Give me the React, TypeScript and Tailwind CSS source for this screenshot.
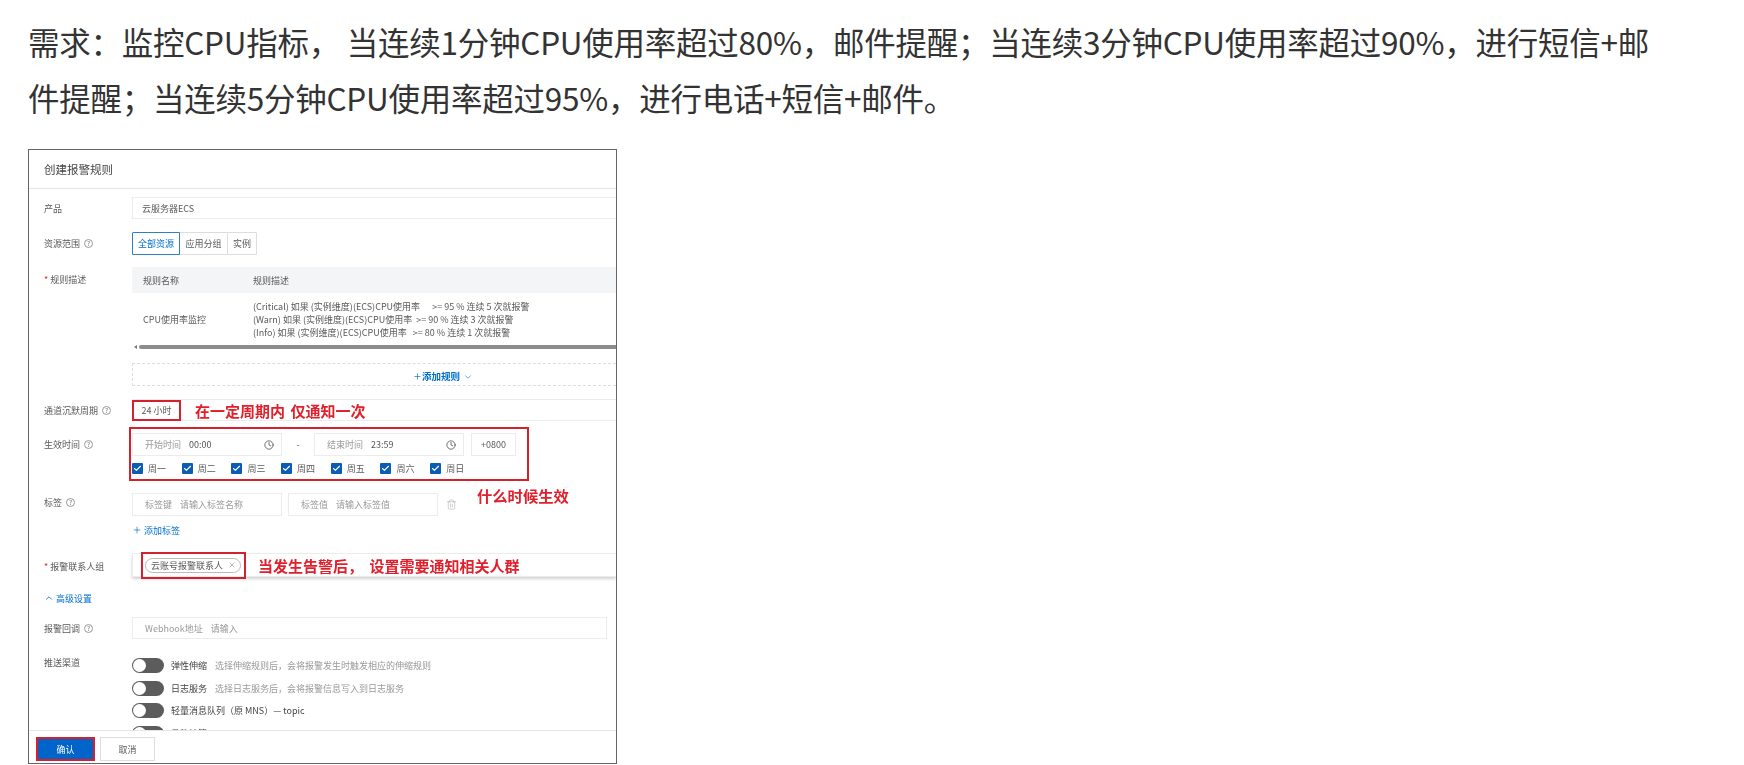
import React from 'react';
import { Check, ChevronDown, ChevronUp, Clock, Plus, Trash2, X } from 'lucide-react';

const days = ['周一', '周二', '周三', '周四', '周五', '周六', '周日'];

const channels = [
  { name: '弹性伸缩', hint: '选择伸缩规则后，会将报警发生时触发相应的伸缩规则' },
  { name: '日志服务', hint: '选择日志服务后，会将报警信息写入到日志服务' },
  { name: '轻量消息队列（原 MNS）— topic', hint: '' },
  { name: '函数计算', hint: '' },
];

function Help() {
  return (
    <span className="ml-[4px] inline-flex size-[9px] items-center justify-center rounded-full border border-[#999] text-[6.5px] leading-none text-[#777]">
      ?
    </span>
  );
}

function Row({
  label,
  required,
  help,
  labelClass = 'h-[22px]',
  className,
  children,
}: {
  label: string;
  required?: boolean;
  help?: boolean;
  labelClass?: string;
  className: string;
  children: React.ReactNode;
}) {
  return (
    <div className={`flex ${className}`}>
      <div className={`flex w-[103px] shrink-0 items-center pl-[15px] ${labelClass}`}>
        {required && <span className="mr-[2px] text-[#d93026]">*</span>}
        {label}
        {help && <Help />}
      </div>
      <div className="relative min-w-0 flex-1">{children}</div>
    </div>
  );
}

function Field({ label, value, className }: { label: string; value: string; className: string }) {
  return (
    <div className={`flex h-[23px] items-center border border-[#ececec] pl-[12px] ${className}`}>
      <span className="text-[#999]">{label}</span>
      <span className="ml-[8px] text-[#999]">{value}</span>
    </div>
  );
}

function TimeField({ label, value }: { label: string; value: string }) {
  return (
    <div className="flex h-[23px] w-[150px] items-center border border-[#ececec] pl-[12px] pr-[7px]">
      <span className="text-[#999]">{label}</span>
      <span className="ml-[8px] text-[#555]">{value}</span>
      <Clock className="ml-auto size-[10px] text-[#444]" strokeWidth={1.8} />
    </div>
  );
}

function AlertForm() {
  return (
    <div className="flex h-[615px] w-[589px] flex-col overflow-hidden border border-[#666] bg-white text-[9px] leading-[13px] text-[#5a5a5a] blur-[0.5px]">
      <div className="flex h-[39px] shrink-0 items-center border-b border-[#e6e6e6] pl-[15px] text-[11.5px] text-[#444]">
        创建报警规则
      </div>

      <div className="min-h-0 flex-1 overflow-hidden">
        <Row label="产品" className="mt-[8px]">
          <div className="flex h-[22px] items-center border border-r-0 border-[#ececec] pl-[9px]">云服务器ECS</div>
        </Row>

        <Row label="资源范围" help labelClass="h-[23px]" className="mt-[13px]">
          <div className="flex h-[23px]">
            <div className="flex w-[48px] items-center justify-center rounded-l-[1px] border border-[#2f7fc1] text-[#0070cc]">全部资源</div>
            <div className="flex w-[47px] items-center justify-center border-y border-[#ddd]">应用分组</div>
            <div className="flex w-[30px] items-center justify-center rounded-r-[1px] border border-[#ddd]">实例</div>
          </div>
        </Row>

        <Row label="规则描述" required labelClass="h-[24px]" className="mt-[12px]">
          <div className="flex h-[26px] items-center bg-[#f4f5f7] pl-[11px]">
            <span className="w-[110px]">规则名称</span>
            <span>规则描述</span>
          </div>
          <div className="flex items-center pl-[11px] pt-[7px] whitespace-nowrap">
            <span className="w-[110px]">CPU使用率监控</span>
            <div>
              <div>(Critical) 如果 (实例维度)(ECS)CPU使用率 &nbsp; &nbsp; &nbsp;&gt;= 95 % 连续 5 次就报警</div>
              <div>(Warn) 如果 (实例维度)(ECS)CPU使用率 &nbsp;&gt;= 90 % 连续 3 次就报警</div>
              <div>(Info) 如果 (实例维度)(ECS)CPU使用率 &nbsp; &gt;= 80 % 连续 1 次就报警</div>
            </div>
          </div>
          <div className="mt-[6px] flex h-[4px] items-center">
            <span className="mx-[2px] h-0 w-0 border-y-[2px] border-r-[3px] border-y-transparent border-r-[#777]" />
            <div className="h-[4px] flex-1 rounded-l-full bg-[#8c8c8c]" />
          </div>
          <div className="mt-[14px] flex h-[23px] items-center border border-r-0 border-dashed border-[#ddd] pl-[280px] pt-[4px] text-[9.5px] font-semibold text-[#0070cc]">
            <Plus className="size-[9px]" strokeWidth={1.8} />
            添加规则
            <ChevronDown className="ml-[3px] size-[10px]" strokeWidth={1.4} />
          </div>
        </Row>

        <Row label="通道沉默周期" help className="mt-[13px]">
          <div className="flex h-[22px] items-center border-y border-[#ececec]">
            <div className="-my-px flex h-[21px] w-[49px] items-center justify-center border-2 border-[#d5202d]">24 小时</div>
            <span className="ml-[14px] text-[15px] leading-none font-bold [word-spacing:2px] text-[#e0202c]">在一定周期内 仅通知一次</span>
          </div>
        </Row>

        <Row label="生效时间" help labelClass="h-[23px]" className="mt-[12px]">
          <div className="absolute -top-[6px] -left-[3px] h-[54px] w-[400px] border-2 border-[#d5202d]" />
          <div className="flex h-[23px] items-center">
            <TimeField label="开始时间" value="00:00" />
            <span className="w-[32px] text-center">-</span>
            <TimeField label="结束时间" value="23:59" />
            <div className="ml-[7px] flex h-[23px] w-[45px] items-center justify-center border border-[#ececec]">+0800</div>
          </div>
          <div className="mt-[6px] flex h-[12px]">
            {days.map((day) => (
              <div key={day} className="flex w-[49.7px] items-center">
                <span className="flex size-[11px] items-center justify-center rounded-[1px] bg-[#0a5cb5] text-white">
                  <Check className="size-[9px]" strokeWidth={3} />
                </span>
                <span className="ml-[5px]">{day}</span>
              </div>
            ))}
          </div>
        </Row>

        <Row label="标签" help labelClass="h-[19px]" className="mt-[19px]">
          <div className="flex h-[23px] items-center">
            <Field label="标签键" value="请输入标签名称" className="w-[150px]" />
            <Field label="标签值" value="请输入标签值" className="ml-[6px] w-[150px]" />
            <Trash2 className="ml-[8px] size-[11px] text-[#aaa]" strokeWidth={1.2} />
            <span className="ml-[20px] -translate-y-[9px] text-[15.3px] leading-none font-bold text-[#e0202c]">什么时候生效</span>
          </div>
          <div className="mt-[8px] flex h-[12px] items-center text-[#0070cc]">
            <Plus className="mr-[2px] size-[10px]" strokeWidth={1.6} />
            添加标签
          </div>
        </Row>

        <Row label="报警联系人组" required labelClass="h-[26px]" className="mt-[17px]">
          <div className="flex h-[24px] items-center border border-r-0 border-[#ececec] shadow-[0_2px_3px_rgba(0,0,0,0.18)]">
            <div className="ml-[8px] flex h-[27px] w-[105px] shrink-0 items-center border-2 border-[#d5202d] pl-[2px]">
              <div className="flex h-[15px] w-[96px] items-center rounded-full border border-[#bbb] pl-[5px]">
                云账号报警联系人
                <X className="ml-auto mr-[4px] size-[8px] text-[#666]" strokeWidth={1.4} />
              </div>
            </div>
            <span className="ml-[12px] text-[15px] leading-none font-bold [word-spacing:3px] whitespace-nowrap text-[#e0202c]">当发生告警后， 设置需要通知相关人群</span>
          </div>
        </Row>

        <div className="mt-[13px] flex h-[12px] items-center pl-[15px] text-[#0070cc]">
          <ChevronUp className="mr-[2px] size-[10px]" strokeWidth={2} />
          高级设置
        </div>

        <Row label="报警回调" help className="mt-[13px]">
          <div className="mr-[9px] flex h-[22px] items-center border border-[#ececec] pl-[12px] text-[#999]">
            Webhook地址<span className="ml-[8px]">请输入</span>
          </div>
        </Row>

        <Row label="推送渠道" labelClass="h-[9px]" className="mt-[19px]">
          <div className="flex flex-col gap-[7.6px]">
            {channels.map((c) => (
              <div key={c.name} className="flex h-[15px] items-center">
                <span className="flex h-[15px] w-[32px] shrink-0 items-center rounded-full bg-[#5c5c5c] pl-[1px]">
                  <span className="size-[13px] rounded-full bg-white" />
                </span>
                <span className="ml-[7px] text-[#444]">{c.name}</span>
                {c.hint && <span className="ml-[8px] text-[#999]">{c.hint}</span>}
              </div>
            ))}
          </div>
        </Row>
      </div>

      <div className="flex h-[33px] shrink-0 items-start border-t border-[#e6e6e6] pl-[7px] pt-[6px]">
        <div className="flex h-[24px] w-[59px] items-center justify-center border-2 border-[#d5202d] bg-[#0064c8] text-white">确认</div>
        <div className="ml-[5px] flex h-[24px] w-[55px] items-center justify-center border border-[#ddd]">取消</div>
      </div>
    </div>
  );
}

export default function App() {
  return (
    <main className="h-[765px] w-[1744px] overflow-hidden bg-white pl-[28px] font-['Noto_Sans_CJK_SC','Open_Sans',sans-serif]">
      <p className="pt-[13px] text-[31.5px] leading-[56px] tracking-[-0.25px] whitespace-nowrap text-[#333]">
        需求：监控CPU指标， 当连续1分钟CPU使用率超过80%，邮件提醒；当连续3分钟CPU使用率超过90%，进行短信+邮
        <br />
        件提醒；当连续5分钟CPU使用率超过95%，进行电话+短信+邮件。
      </p>
      <div className="mt-[24px]">
        <AlertForm />
      </div>
    </main>
  );
}
